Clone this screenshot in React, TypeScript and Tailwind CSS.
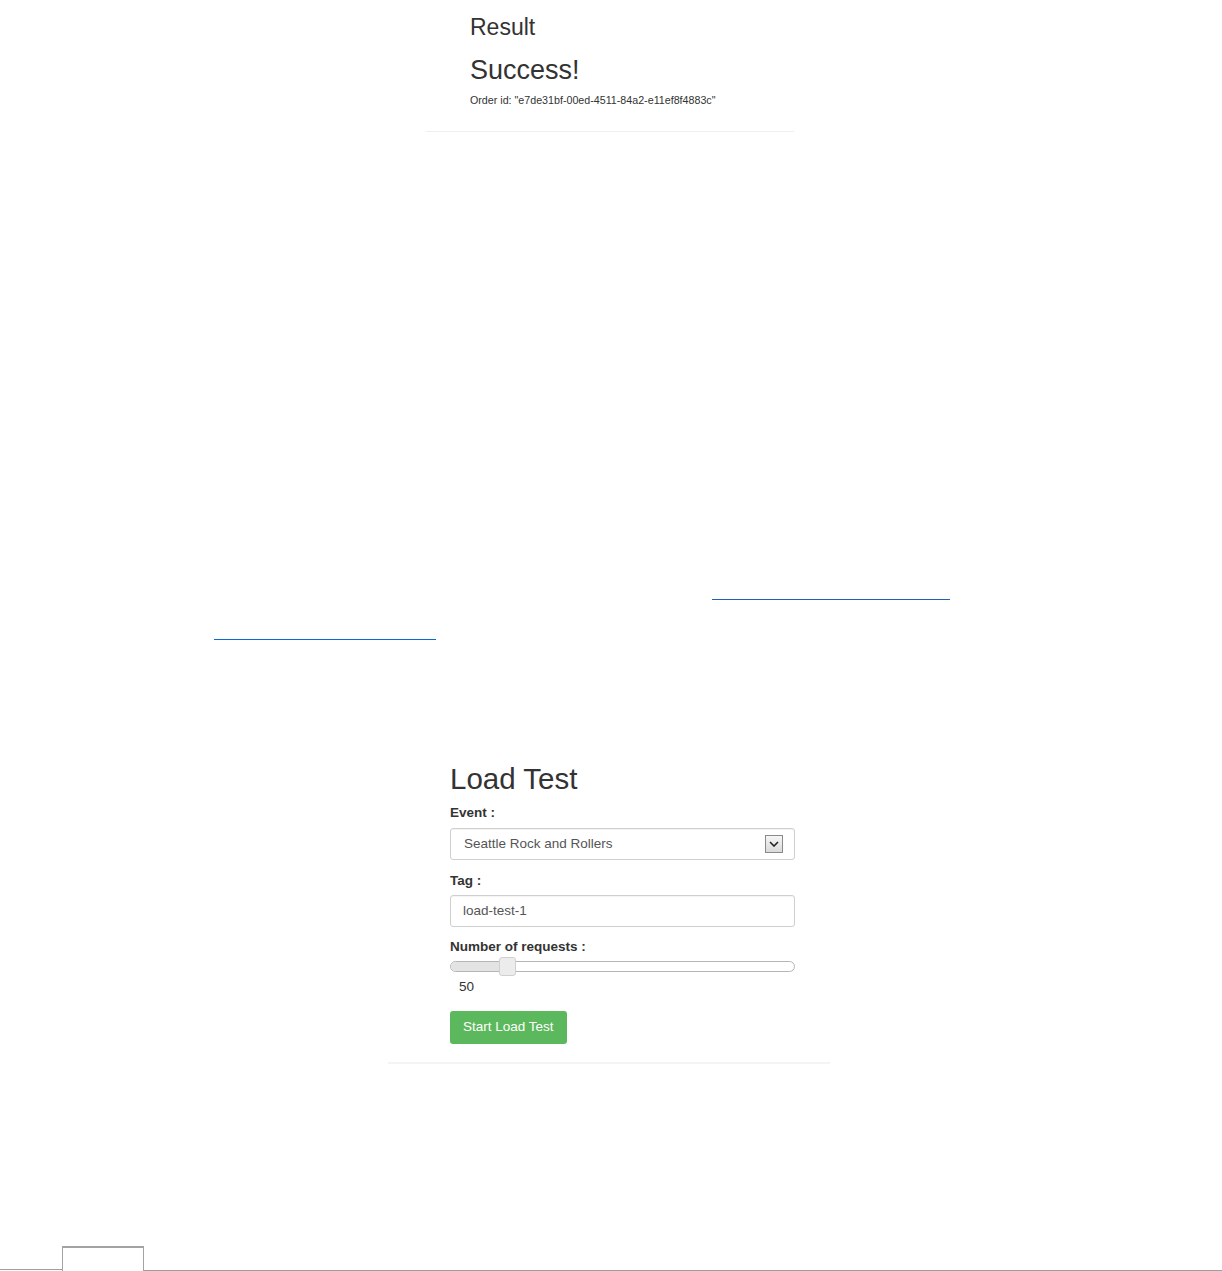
export default function App() {
  return (
    <div className="flex h-[1271px] w-full flex-col bg-white font-['Liberation_Sans',Arial,sans-serif] text-[#333]">
      {/* result panel */}
      <div className="ml-[426px] w-[368px] border-b border-[#eeeeee] pb-[24px] pl-[44px] pt-[14px]">
        <h3 className="text-[23px] leading-[26px]">Result</h3>
        <h2 className="mt-[14px] text-[27px] leading-[32px]">Success!</h2>
        <p className="mt-[7px] text-[10.7px] leading-[14px]">
          Order id: "e7de31bf-00ed-4511-84a2-e11ef8f4883c"
        </p>
      </div>

      {/* links */}
      <div className="mt-[467px] pl-[712px]">
        <div className="h-[1px] w-[238px] bg-[#1f62b4]"></div>
      </div>
      <div className="mt-[39px] pl-[214px]">
        <div className="h-[1px] w-[222px] bg-[#0a6ad4]"></div>
      </div>

      {/* load test panel */}
      <div className="ml-[388px] mt-[123px] w-[442px] border-b-2 border-[#f4f4f4] pb-[18px] pl-[62px] pr-[35px]">
        <h2 className="text-[29.5px] leading-[32px] text-[#333]">Load Test</h2>

        <label className="mt-[9px] block text-[13.5px] font-bold leading-[18px]">
          Event :
        </label>
        <div className="mt-[6px] flex h-[32px] items-center rounded-[3px] border border-[#cfcfcf] pl-[13px] pr-[11px] text-[13.5px] text-[#555] shadow-[inset_0_1px_1px_rgba(0,0,0,0.05)]">
          <span className="flex-1">Seattle Rock and Rollers</span>
          <div className="flex h-[18px] w-[18px] items-center justify-center border border-[#8a8a8a] bg-gradient-to-b from-[#f6f6f6] to-[#dadada]">
            <svg width="10" height="6" viewBox="0 0 10 6" fill="none">
              <path d="M1 1l4 4 4-4" stroke="#222" strokeWidth="1.6" />
            </svg>
          </div>
        </div>

        <label className="mt-[12px] block text-[13.5px] font-bold leading-[18px]">
          Tag :
        </label>
        <div className="mt-[5px] flex h-[32px] items-center rounded-[3px] border border-[#cfcfcf] pl-[12px] text-[13.5px] text-[#555] shadow-[inset_0_1px_1px_rgba(0,0,0,0.05)]">
          load-test-1
        </div>

        <label className="mt-[11px] block text-[13.5px] font-bold leading-[18px]">
          Number of requests :
        </label>
        <div className="relative mt-[5px] h-[11px] w-full rounded-full border border-[#b5b5b5] bg-white">
          <div className="h-full w-[56px] rounded-l-full bg-[#e3e3e3]"></div>
          <div className="absolute left-[48px] top-[-5px] h-[19px] w-[17px] rounded-[3px] border border-[#d0d0d0] bg-[#ececec]"></div>
        </div>
        <p className="mt-[6px] pl-[9px] text-[13.5px] leading-[18px]">50</p>

        <button className="mt-[15px] h-[33px] rounded-[3px] bg-[#5cb85c] px-[13px] text-[13.5px] text-white">
          Start Load Test
        </button>
      </div>

      {/* bottom tab strip */}
      <div className="mt-auto flex h-[25px] items-end">
        <div className="mb-[1px] w-[62px] border-b border-[#9e9e9e]"></div>
        <div className="h-[25px] w-[82px] border-l border-r border-t-2 border-[#a3a3a3]"></div>
        <div className="flex-1 border-b border-[#9e9e9e]"></div>
      </div>
    </div>
  );
}
